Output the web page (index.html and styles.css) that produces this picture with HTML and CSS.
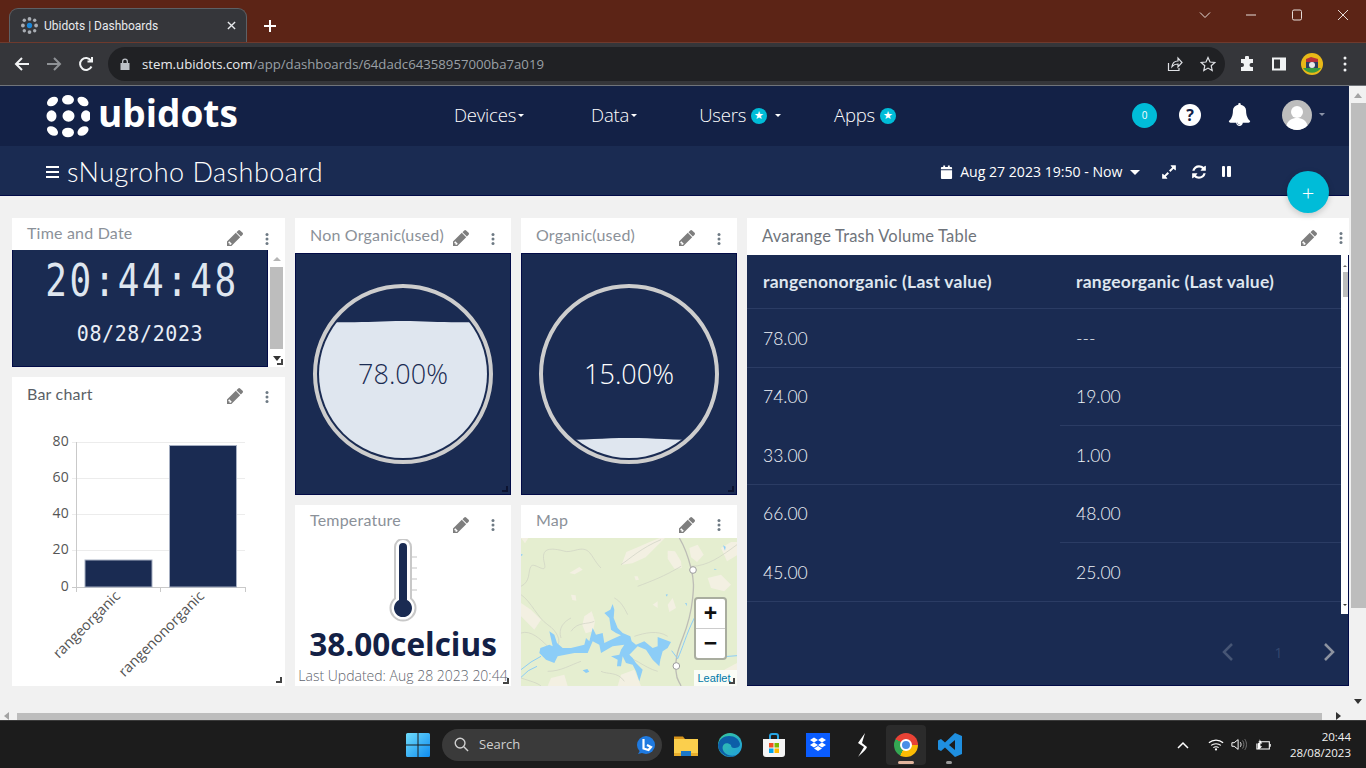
FILE: index.html
```html
<!DOCTYPE html>
<html lang="en">
<head>
<meta charset="utf-8">
<title>Ubidots | Dashboards</title>
<link rel="stylesheet" href="styles.css">
</head>
<body>
<svg class="sprite" aria-hidden="true">
  <symbol id="pencil" viewBox="115 224 1364 1364"><path d="M363 1536h128l91-91-235-235-91 91v107h107zM960 416l416 416-832 832H128v-416zM1643 512q0 53-37 90l-166 166-416-416 166-165q36-38 90-38 53 0 91 38l235 234q37 39 37 91z" transform="scale(.9) translate(0 100)"/></symbol>
  <symbol id="dots" viewBox="0 0 8 18"><circle cx="4" cy="3" r="2"/><circle cx="4" cy="9" r="2"/><circle cx="4" cy="15" r="2"/></symbol>
  <symbol id="grip" viewBox="0 0 6 6"><path d="M6 0v6H0V4h4V0z"/></symbol>
</svg>

<header class="browser">
  <div class="tabstrip">
    <div class="tab">
      <svg class="favicon" viewBox="0 0 18 18"><g fill="#a9adb3"><circle cx="9" cy="2" r="2"/><circle cx="3.500" cy="3.500" r="1.800"/><circle cx="14.500" cy="3.500" r="1.800"/><circle cx="2" cy="9" r="2"/><circle cx="16" cy="9" r="2"/><circle cx="3.500" cy="14.500" r="1.800"/><circle cx="14.500" cy="14.500" r="1.800"/><circle cx="9" cy="16" r="2"/></g><circle cx="9" cy="9" r="2.800" fill="#1a86d8"/></svg>
      <span class="tab-title">Ubidots | Dashboards</span>
      <svg class="tab-close" viewBox="0 0 10 10"><path d="M1 1l8 8M9 1l-8 8"/></svg>
    </div>
    <svg class="new-tab" viewBox="0 0 12 12"><path d="M6 0v12M0 6h12"/></svg>
    <div class="win-controls">
      <svg viewBox="0 0 12 12"><path d="M1 3.500l5 5 5-5"/></svg>
      <svg viewBox="0 0 12 12"><path d="M1 6h10"/></svg>
      <svg viewBox="0 0 12 12"><rect x="1.500" y="1" width="9" height="10" rx="1.500"/></svg>
      <svg viewBox="0 0 12 12"><path d="M1 1l10 10M11 1L1 11"/></svg>
    </div>
  </div>
  <div class="toolbar">
    <svg class="tool tool-back" viewBox="0 0 16 16"><path d="M15 8H2M8 2L2 8l6 6"/></svg>
    <svg class="tool tool-fwd" viewBox="0 0 16 16"><path d="M1 8h13M8 2l6 6-6 6"/></svg>
    <svg class="tool tool-reload" viewBox="0 0 16 16"><path d="M13.500 10.500A6 6 0 1 1 13 4.500M14 1v4.500H9.500"/></svg>
    <div class="omnibox">
      <svg class="lock" viewBox="0 0 10 12"><path d="M2 5V3.500a3 3 0 0 1 6 0V5h1.500v7H.5V5zM3.300 5h3.400V3.500a1.700 1.700 0 0 0-3.400 0z"/></svg>
      <span class="url"><b>stem.ubidots.com</b>/app/dashboards/64dadc64358957000ba7a019</span>
      <svg class="omni-ico share" viewBox="0 0 16 16"><path d="M1.500 7v7.500H12V12M5 10.500C5.500 7 8 5 11 5V2l4 4.500L11 11V8C8.500 8 6.500 8.800 5 10.500z"/></svg>
      <svg class="omni-ico star" viewBox="0 0 16 16"><path d="M8 1.500l2 4.500 4.800.500-3.600 3.200 1 4.800L8 12.100l-4.200 2.400 1-4.800L1.200 6.500 6 6z"/></svg>
    </div>
    <svg class="ext puzzle" viewBox="0 0 16 16"><path d="M6 1.500a2 2 0 0 1 4 0V3h4v4h-1.500a2 2 0 0 0 0 4H14v4H2v-4h1a2 2 0 0 0 0-4H2V3h4z"/></svg>
    <svg class="ext panel" viewBox="0 0 16 16"><path fill-rule="evenodd" d="M1 1.500h14v13H1zM3 3.500v9h6v-9z"/></svg>
    <svg class="profile" viewBox="0 0 22 22"><circle cx="11" cy="11" r="11" fill="#e9b918"/><path d="M2 15a11 11 0 0 0 18 0z" fill="#3a9c3d"/><rect x="5" y="6" width="12" height="9" fill="#2c3e63"/><path d="M5 6l5-2 7 2v3H5z" fill="#b7323a"/><circle cx="11" cy="12" r="3" fill="#e8e8e8"/></svg>
    <svg class="ext menu" viewBox="0 0 4 16"><circle cx="2" cy="2" r="1.500"/><circle cx="2" cy="8" r="1.500"/><circle cx="2" cy="14" r="1.500"/></svg>
  </div>
</header>

<div class="viewport">
  <div class="app">
    <nav class="topnav">
      <div class="logo">
        <svg class="logo-mark" viewBox="0 0 44 44"><g fill="#fff"><ellipse cx="22.500" cy="22" rx="6" ry="5.800"/><ellipse cx="22" cy="5.800" rx="6" ry="4.800"/><ellipse cx="22" cy="38.500" rx="6" ry="4.800"/><ellipse cx="5.500" cy="22" rx="5" ry="5.800"/><ellipse cx="40" cy="22" rx="5" ry="5.800"/><ellipse cx="6.500" cy="7.500" rx="6" ry="4.200" transform="rotate(-35 6.500 7.500)"/><ellipse cx="37" cy="7.500" rx="6" ry="4.200" transform="rotate(35 37 7.500)"/><ellipse cx="6.500" cy="37" rx="6" ry="4.200" transform="rotate(35 6.500 37)"/><ellipse cx="37" cy="37" rx="6" ry="4.200" transform="rotate(-35 37 37)"/></g></svg>
        <span class="logo-word">ubidots</span>
      </div>
      <a class="nav-item nav-devices">Devices<i class="caret-sm"></i></a>
      <a class="nav-item nav-data">Data<i class="caret-sm"></i></a>
      <a class="nav-item nav-users">Users<i class="star-badge">★</i><i class="caret-sm caret-gap"></i></a>
      <a class="nav-item nav-apps">Apps<i class="star-badge">★</i></a>
      <span class="count-badge">0</span>
      <span class="help">?</span>
      <svg class="bell" viewBox="0 0 1792 1792"><path d="M912 1696q0-16-16-16-59 0-101.500-42.500t-42.500-101.500q0-16-16-16t-16 16q0 73 51.500 124.500t124.500 51.500q16 0 16-16zm816-288q0 52-38 90t-90 38h-448q0 106-75 181t-181 75-181-75-75-181h-448q-52 0-90-38t-38-90q50-42 91-88t85-119.500 74.500-158.500 50-206 19.500-260q0-152 117-282.500t307-158.500q-8-19-8-39 0-40 28-68t68-28 68 28 28 68q0 20-8 39 190 28 307 158.500t117 282.500q0 139 19.500 260t50 206 74.500 158.500 85 119.500 91 88z"/></svg>
      <svg class="avatar" viewBox="0 0 30 30"><circle cx="15" cy="15" r="15" fill="#bdbdbd"/><circle cx="15" cy="12" r="6" fill="#fff"/><path d="M4.500 25.500C6 20 10 18 15 18s9 2 10.500 7.500A15 15 0 0 1 15 30 15 15 0 0 1 4.500 25.500z" fill="#fff"/></svg>
      <i class="caret-sm caret-user"></i>
    </nav>
    <div class="subbar">
      <span class="hamburger"><i></i><i></i><i></i></span>
      <h1 class="dash-title">sNugroho Dashboard</h1>
      <svg class="cal" viewBox="0 0 14 16"><path d="M1 6h12v8.500a1 1 0 0 1-1 1H2a1 1 0 0 1-1-1zM1 5V3.500a1 1 0 0 1 1-1h1.500V1h2v1.500h3V1h2v1.500H12a1 1 0 0 1 1 1V5z"/></svg>
      <span class="range">Aug 27 2023 19:50 - Now</span>
      <i class="caret-range"></i>
      <svg class="sub-ico ico-expand" viewBox="0 0 1792 1792"><path d="M883 1056q0 13-10 23l-332 332 144 144q19 19 19 45t-19 45-45 19h-448q-26 0-45-19t-19-45v-448q0-26 19-45t45-19 45 19l144 144 332-332q10-10 23-10t23 10l114 114q10 10 10 23zm781-864v448q0 26-19 45t-45 19-45-19l-144-144-332 332q-10 10-23 10t-23-10l-114-114q-10-10-10-23t10-23l332-332-144-144q-19-19-19-45t19-45 45-19h448q26 0 45 19t19 45z"/></svg>
      <svg class="sub-ico ico-refresh" viewBox="0 0 1792 1792"><path d="M1639 1056q0 5-1 7-64 268-268 434.500t-478 166.500q-146 0-282.500-55t-243.500-157l-129 129q-19 19-45 19t-45-19-19-45v-448q0-26 19-45t45-19h448q26 0 45 19t19 45-19 45l-137 137q71 66 161 102t187 36q134 0 250-65t186-179q11-17 53-117 8-23 30-23h192q13 0 22.500 9.500t9.500 22.500zm25-800v448q0 26-19 45t-45 19h-448q-26 0-45-19t-19-45 19-45l138-138q-148-137-349-137-134 0-250 65t-186 179q-11 17-53 117-8 23-30 23h-199q-13 0-22.500-9.500t-9.500-22.500v-7q65-268 270-434.500t480-166.500q146 0 284 55.500t245 156.500l130-129q19-19 45-19t45 19 19 45z"/></svg>
      <span class="pause"><i></i><i></i></span>
    </div>
    <button class="fab">+</button>
    <main class="canvas">
      <div class="col col-a">
        <section class="widget w-clock">
          <div class="w-head h-32"><span class="w-title">Time and Date</span><svg class="pen"><use href="#pencil"/></svg><svg class="kebab"><use href="#dots"/></svg></div>
          <div class="clock-row">
            <div class="clock">
              <div class="clock-time">20:44:48</div>
              <div class="clock-date">08/28/2023</div>
            </div>
            <div class="mini-scroll"><i class="arrow-up"></i><i class="mini-thumb"></i></div>
          </div>
          <i class="clock-down"></i>
          <svg class="grip grip-clock"><use href="#grip"/></svg>
        </section>
        <section class="widget w-bar">
          <div class="w-head h-32"><span class="w-title dark">Bar chart</span><svg class="pen"><use href="#pencil"/></svg><svg class="kebab"><use href="#dots"/></svg></div>
          <svg class="chart" viewBox="12 409 273 277">
            <g class="grid-lines"><path d="M72 442.500h173M72 478.500h173M72 514.500h173M72 550.500h173"/></g>
            <path class="axis" d="M76.500 442v150M72 587.500h173.500M160.500 587v5M245.500 587v5"/>
            <rect class="bar" x="85" y="560" width="67" height="27"/>
            <rect class="bar" x="169.500" y="445.500" width="67" height="141.500"/>
            <g class="y-labels"><text x="69" y="446">80</text><text x="69" y="482">60</text><text x="69" y="518">40</text><text x="69" y="554">20</text><text x="69" y="591">0</text></g>
            <text class="x-label" transform="translate(121 597) rotate(-45)">rangeorganic</text>
            <text class="x-label" transform="translate(205 597) rotate(-45)">rangenonorganic</text>
          </svg>
          <svg class="grip grip-bar"><use href="#grip"/></svg>
        </section>
      </div>

      <div class="col col-b">
        <section class="widget w-gauge">
          <div class="w-head h-35"><span class="w-title">Non Organic(used)</span><svg class="pen"><use href="#pencil"/></svg><svg class="kebab"><use href="#dots"/></svg></div>
          <div class="navy-body">
            <svg class="gauge" viewBox="-108 -121 216 242">
              <defs><clipPath id="clip-a"><circle r="84"/></clipPath></defs>
              <path clip-path="url(#clip-a)" class="liquid" d="M-90 -53C-50 -50 -30 -53 0 -53S50 -50 90 -53V90H-90z"/>
              <circle class="ring" r="88"/>
              <text class="gauge-text on-light" y="10">78.00%</text>
            </svg>
            <svg class="grip grip-navy"><use href="#grip"/></svg>
          </div>
        </section>
        <section class="widget w-temp">
          <div class="w-head h-33"><span class="w-title">Temperature</span><svg class="pen"><use href="#pencil"/></svg><svg class="kebab"><use href="#dots"/></svg></div>
          <svg class="thermo" viewBox="0 0 32 86">
            <path class="thermo-ticks" d="M24 18h6M24 29h6M24 40h6M24 51h6"/>
            <path class="thermo-shell" d="M8 8a8 8 0 0 1 16 0v51.500a12.500 12.500 0 1 1-16 0z"/>
            <path class="thermo-fill" d="M12 8a4 4 0 0 1 8 0v53a9 9 0 1 1-8 0z"/>
          </svg>
          <div class="temp-value">38.00celcius</div>
          <div class="temp-updated">Last Updated: Aug 28 2023 20:44</div>
          <svg class="grip grip-temp"><use href="#grip"/></svg>
        </section>
      </div>

      <div class="col col-b">
        <section class="widget w-gauge">
          <div class="w-head h-35"><span class="w-title">Organic(used)</span><svg class="pen"><use href="#pencil"/></svg><svg class="kebab"><use href="#dots"/></svg></div>
          <div class="navy-body">
            <svg class="gauge" viewBox="-108 -121 216 242">
              <defs><clipPath id="clip-b"><circle r="84"/></clipPath></defs>
              <path clip-path="url(#clip-b)" class="liquid" d="M-90 66C-50 67 -30 64 0 64S50 67 90 66V90H-90z"/>
              <circle class="ring" r="88"/>
              <text class="gauge-text on-dark" y="10">15.00%</text>
            </svg>
            <svg class="grip grip-navy"><use href="#grip"/></svg>
          </div>
        </section>
        <section class="widget w-map">
          <div class="w-head h-33"><span class="w-title">Map</span><svg class="pen"><use href="#pencil"/></svg><svg class="kebab"><use href="#dots"/></svg></div>
          <div class="map">
            <svg class="map-svg" viewBox="0 0 648 444">
              <rect width="648" height="444" fill="#e5eed0"/>
              <g class="patches">
                <path d="M0 0h22l-10 16zM302 80l14-38 34-14 36-16 30-12h16l-28 28-30 30-40 18zM440 38l22 2 18 30 2 20-22 2-20-30zM505 30l25-10 18 30-20 22-18-14zM600 30l30-18 18 0v40l-30 18zM145 105l30-18 10 8-24 14zM150 170l14 2 2 16-12-2zM190 235l22-15 10 30-6 30-22 6-10-25zM0 195l30 20 30 30-20 30-40-40zM300 410l40-15 20 49h-70zM90 420l40-10 10 34H80zM440 200l15-20 10 30-20 12zM560 120l40-10 30 30-20 20-40-10zM395 200l15-10 0 20zM340 115l10 0 4 10-10 2zM610 395l38-20v22h-30z"/>
              </g>
              <g class="roads">
                <path d="M0 145C30 130 20 100 30 85S80 115 70 75S80 30 110 35S130 45 170 35S210 60 240 90"/>
                <path d="M0 170C30 190 50 240 80 260s40 50 30 60"/>
                <path d="M0 285c30-10 60 20 80 40"/>
                <path d="M150 280c20-30 50-20 70-30"/>
                <path d="M510 85c50 0 90-30 138-65"/>
                <path d="M300 80c30-20 60-50 120-75"/>
                <path d="M350 145c40-15 80-30 130-60"/>
                <path d="M280 180c20 10 30 30 40 50"/>
                <path d="M340 295c30-10 70-20 100 0"/>
                <path d="M410 400c-40-10-80-50-100-40"/>
                <path d="M80 400c40 0 70-20 100-30"/>
                <path d="M0 420c30 10 50 15 60 24"/>
                <path d="M120 300c-10-30 10-50 30-60"/>
                <path d="M240 400c20 10 50 0 70 30"/>
                <path class="road-main" d="M475 0c15 25 25 50 35 90s8 60 5 90-10 70-30 120-22 70-20 100 10 30 15 44"/>
              </g>
              <path class="lake" d="M58 330L85 320 95 325 85 280 100 290 108 315 125 330 150 330 190 320 195 300 205 310 215 270 225 290 245 285 250 315 270 305 300 292 285 285 270 275 265 240 250 225 268 215 275 198 280 215 278 240 290 270 305 285 328 295 332 310 345 320 370 310 395 330 410 325 410 297 450 312 440 330 425 340 418 365 415 385 395 365 375 335 350 325 325 350 335 360 345 375 365 395 355 430 345 400 335 380 315 375 305 355 300 385 288 385 290 365 270 355 295 350 300 335 310 320 275 325 240 345 235 320 215 310 200 345 160 345 110 355 100 375 75 365 55 345z"/>
              <g class="rivers">
                <path d="M60 355L30 372 0 395"/>
                <path d="M48 385L22 398 0 418"/>
                <path d="M452 338L470 362C485 330 495 290 520 240"/>
                <path d="M610 356L648 353"/>
              </g>
              <path class="lake" d="M185 397l14-4 6 8-10 4zM606 22l8 4-2 12zM434 170l6-2-2 8zM492 195l5 0 1 10zM580 92l8 2-8 2zM0 48l6 2-6 4z"/>
              <g class="shield"><circle cx="516" cy="96" r="10"/><circle cx="466" cy="384" r="10"/></g>
            </svg>
            <div class="zoom-ctl"><span class="zoom-btn">+</span><span class="zoom-btn">−</span></div>
            <div class="leaflet">Leaflet</div>
            <svg class="grip grip-map"><use href="#grip"/></svg>
          </div>
        </section>
      </div>

      <div class="col col-d">
        <section class="widget w-table">
          <div class="w-head h-37 head-table"><span class="w-title">Avarange Trash Volume Table</span><svg class="pen"><use href="#pencil"/></svg><svg class="kebab"><use href="#dots"/></svg></div>
          <div class="table-body">
            <div class="table-row">
              <table class="data">
                <thead><tr><th class="c1">rangenonorganic (Last value)</th><th>rangeorganic (Last value)</th></tr></thead>
                <tbody>
                  <tr><td class="c1">78.00</td><td>---</td></tr>
                  <tr><td class="c1 no-line">74.00</td><td>19.00</td></tr>
                  <tr><td class="c1">33.00</td><td>1.00</td></tr>
                  <tr><td class="c1 no-line">66.00</td><td>48.00</td></tr>
                  <tr><td class="c1">45.00</td><td>25.00</td></tr>
                </tbody>
              </table>
              <div class="tbl-scroll"><i class="tbl-up"></i><i class="tbl-thumb"></i><i class="tbl-down"></i></div>
            </div>
            <div class="pager">
              <svg class="pg pg-prev" viewBox="0 0 12 20"><path d="M10 2L2 10l8 8"/></svg>
              <span class="pg-num">1</span>
              <svg class="pg pg-next" viewBox="0 0 12 20"><path d="M2 2l8 8-8 8"/></svg>
            </div>
          </div>
        </section>
      </div>
    </main>
    <div class="hscroll"><i class="h-left"></i><i class="h-thumb"></i><i class="h-right"></i></div>
  </div>
  <aside class="vscroll"><i class="v-up"></i><i class="v-thumb"></i><i class="v-down"></i></aside>
</div>

<footer class="taskbar">
  <svg class="win" viewBox="0 0 24 24"><defs><linearGradient id="wg" x1="0" y1="0" x2="1" y2="1"><stop offset="0" stop-color="#6fdcfb"/><stop offset="1" stop-color="#0f8cf0"/></linearGradient></defs><path fill="url(#wg)" d="M0 1.500A1.500 1.500 0 0 1 1.500 0h10v11.500H0zM12.500 0h10A1.500 1.500 0 0 1 24 1.500v10H12.500zM0 12.500h11.500V24h-10A1.500 1.500 0 0 1 0 22.500zM12.500 12.500H24v10a1.500 1.500 0 0 1-1.500 1.500h-10z"/></svg>
  <div class="search">
    <svg class="s-ico" viewBox="0 0 16 16"><circle cx="6.500" cy="6.500" r="5.200"/><path d="M10.500 10.500L15 15"/></svg>
    <span>Search</span>
    <svg class="bing" viewBox="0 0 20 20"><circle cx="10" cy="10" r="9" fill="#1f7ae0"/><path d="M2 19l3-5 5 3z" fill="#1f7ae0"/><path d="M7.500 4v9.500l5 1.500 2.500-3-4-2" fill="none" stroke="#fff" stroke-width="2.200"/></svg>
  </div>
  <svg class="app-ico ico-folder" viewBox="0 0 24 24"><path d="M0 3.500h9l2 2.500H0z" fill="#d8941a"/><path d="M0 6h24v17H0z" fill="#fbcf4d"/><path d="M0 20h24v3H0z" fill="#e8ae2c"/><path d="M7 18h10v5H7z" fill="#1b78c9"/></svg>
  <svg class="app-ico ico-edge" viewBox="0 0 24 24"><defs><linearGradient id="eg" x1="0" y1="0" x2="1" y2="1"><stop offset="0" stop-color="#37c99a"/><stop offset="1" stop-color="#1f9de0"/></linearGradient></defs><circle cx="12" cy="12" r="12" fill="url(#eg)"/><path d="M0 12C1 6 6 3 11 3c6 0 10 3 11 8 0 3-3 4-6 4-2 0-3-1-3-3C8 8 3 12 5 17c1.500 4 7 7 13 5-4 3-9 2-13-1C2 19 0 16 0 12z" fill="#0d5ea8"/></svg>
  <svg class="app-ico ico-store" viewBox="0 0 24 24"><path d="M8 6V3a2 2 0 0 1 2-2h4a2 2 0 0 1 2 2v3" fill="none" stroke="#27a5e4" stroke-width="2"/><path d="M1 6h22v15a3 3 0 0 1-3 3H4a3 3 0 0 1-3-3z" fill="#f4f4f4"/><path d="M7 10h4.500v4.500H7z" fill="#f25022"/><path d="M12.500 10H17v4.500h-4.500z" fill="#7fba00"/><path d="M7 15.500h4.500V20H7z" fill="#00a4ef"/><path d="M12.500 15.500H17V20h-4.500z" fill="#ffb900"/></svg>
  <svg class="app-ico ico-dropbox" viewBox="0 0 24 24"><path d="M0 0h24v24H0z" fill="#0a5cff"/><path d="M8 4.500l4 2.500-4 2.500L4 7zM16 4.500l4 2.500-4 2.500L12 7zM8 9.500l4 2.500-4 2.500L4 12zM16 9.500l4 2.500-4 2.500L12 12zM8 15.500l4-2.500 4 2.500-4 2.500z" fill="#fff"/></svg>
  <svg class="app-ico ico-bolt" viewBox="0 0 24 24"><path d="M15 0L8 10l6 4-6 10c3-3 8-7 9-10l-5-4z" fill="#fff"/></svg>
  <div class="chrome-slot"><span class="chrome-ico"><i></i></span><b class="underline"></b></div>
  <div class="code-slot">
    <svg class="app-ico" viewBox="0 0 24 24"><path d="M17 0l7 3v18l-7 3-10-9.500L3 18l-3-1.500v-9L3 6l4 3.500zM17 7l-6 5 6 5z" fill="#1f8fe0"/></svg>
    <b class="underline grey"></b>
  </div>
  <div class="tray">
    <svg class="t-caret" viewBox="0 0 12 8"><path d="M1 7l5-5 5 5"/></svg>
    <svg class="t-wifi" viewBox="0 0 18 14"><path d="M1 5c4.500-4 11.500-4 16 0M3.500 8c3-2.500 8-2.500 11 0M6 10.500c1.800-1.200 4.200-1.200 6 0"/><circle cx="9" cy="12.500" r="1.300"/></svg>
    <svg class="t-vol" viewBox="0 0 18 14"><path d="M1 5h2.500L8 1.500v11L3.500 9H1zM10.500 4.500c1 1.500 1 3.500 0 5"/><path class="t-dim" d="M13 2.500c2 2.500 2 6.500 0 9M15.500 1c2.500 3.500 2.500 8.500 0 12"/></svg>
    <svg class="t-batt" viewBox="0 0 18 14"><path d="M3 4h12v8H1V6"/><path d="M16 6.500v3"/><path class="t-fill" d="M2 12V6l2-1.500V1L7 6H5v3l2 0-3 3z"/></svg>
    <div class="clock-tray"><span>20:44</span><span>28/08/2023</span></div>
  </div>
</footer>
</body>
</html>
```

FILE: styles.css
```css
* { box-sizing: border-box; }
html, body { margin: 0; height: 768px; overflow: hidden; }
body { display: flex; flex-direction: column; width: 1366px; font-family: "Open Sans", sans-serif; background: #f1f1f1; }
i { display: block; font-style: normal; }
svg { display: block; flex: none; }
.sprite { position: absolute; width: 0; height: 0; }

/* browser chrome */
.browser { flex: none; height: 86px; }
.tabstrip { height: 43px; background: #5c2416; display: flex; align-items: flex-end; padding-left: 9px; border-bottom: 1px solid #6e3a2d; }
.tab { width: 238px; height: 34px; background: #35363a; border-radius: 9px 9px 0 0; border: 1px solid #5d6166; border-bottom: 0; display: flex; align-items: center; padding: 0 0 0 11px; }
.favicon { width: 17px; height: 17px; }
.tab-title { margin-left: 6px; color: #e8eaed; font: 12px "Roboto", sans-serif; flex: 1; }
.tab-close { width: 9px; height: 9px; margin-right: 10px; fill: none; stroke: #e8eaed; stroke-width: 1.500; }
.new-tab { width: 12px; height: 12px; margin: 0 0 10px 17px; fill: none; stroke: #fff; stroke-width: 2; }
.win-controls { margin-left: auto; align-self: flex-start; display: flex; padding-top: 9px; padding-right: 17px; gap: 34px; }
.win-controls svg { width: 12px; height: 12px; fill: none; stroke: #e6dcd8; stroke-width: 1; }
.toolbar { height: 43px; background: #35363a; border-bottom: 1px solid #70747a; display: flex; align-items: center; position: relative; }
.tool { width: 16px; height: 16px; fill: none; stroke-width: 2; stroke: #f1f3f4; }
.tool-back { margin-left: 14px; }
.tool-fwd { margin-left: 16px; stroke: #8f9296; }
.tool-reload { margin-left: 16px; }
.omnibox { margin-left: 14px; width: 1117px; height: 34px; background: #202124; border-radius: 17px; display: flex; align-items: center; }
.lock { width: 10px; height: 12px; margin-left: 12px; fill: #bdc1c6; }
.url { margin-left: 12px; font: 13.200px "Open Sans", sans-serif; color: #9aa0a6; flex: 1; white-space: nowrap; }
.url b { color: #e8eaed; font-weight: 400; }
.omni-ico { width: 16px; height: 16px; fill: none; stroke: #dfe1e5; stroke-width: 1.200; }
.share { margin-right: 17px; }
.star { margin-right: 9px; }
.ext { fill: #f1f3f4; }
.puzzle { width: 16px; height: 16px; margin-left: 14px; }
.panel { width: 16px; height: 16px; margin-left: 16px; }
.profile { width: 22px; height: 22px; margin-left: 14px; }
.menu { width: 4px; height: 16px; margin-left: 20px; }

/* app */
.viewport { flex: none; height: 634px; display: flex; }
.app { width: 1349px; display: flex; flex-direction: column; position: relative; }
.topnav { height: 60px; background: #132146; display: flex; align-items: center; color: #fff; }
.logo { display: flex; align-items: center; margin-left: 46px; width: 191px; }
.logo-mark { width: 44px; height: 44px; }
.logo-word { margin-left: 8px; font: 700 37px/44px "Open Sans", sans-serif; color: #fff; margin-top: -5px; }
.nav-item { display: flex; align-items: center; font: 300 18.500px "Open Sans", sans-serif; color: #fff; letter-spacing: -.2px; margin-top: -2px; }
.nav-devices { margin-left: 217px; }
.nav-data { margin-left: 67px; }
.nav-users { margin-left: 62px; }
.nav-apps { margin-left: 53px; }
.caret-sm { width: 0; height: 0; border: 3.500px solid transparent; border-top-color: #fff; border-bottom: 0; margin-left: 2px; margin-top: 2px; }
.caret-gap { margin-left: 8px; }
.star-badge { width: 16px; height: 16px; border-radius: 50%; background: #00bcd8; color: #fff; font-size: 11px; line-height: 16px; text-align: center; margin-left: 5px; margin-top: 2px; font-family: "DejaVu Sans", sans-serif; }
.count-badge { margin-left: 236px; width: 25px; height: 25px; border-radius: 50%; background: #00bcd8; color: #fff; font-size: 10px; line-height: 25px; text-align: center; }
.help { margin-left: 22px; width: 22px; height: 22px; border-radius: 50%; background: #fff; color: #132146; font: 700 16px/22px "Open Sans", sans-serif; text-align: center; margin-top: -2px; }
.bell { width: 23px; height: 23px; fill: #fff; margin-left: 27px; margin-top: -2px; }
.avatar { width: 30px; height: 30px; margin-left: 31px; margin-top: -1px; }
.caret-user { border-top-color: #8b93a7; margin-left: 7px; margin-top: -2px; }

.subbar { height: 50px; padding-top: 3px; background: #1a2b52; border-bottom: 1px solid #020b47; display: flex; align-items: center; color: #fff; }
.hamburger { margin-left: 46px; width: 13px; display: flex; flex-direction: column; gap: 3px; }
.hamburger i { height: 2px; background: #fff; }
.dash-title { margin: 0 0 0 8px; font: 300 27px "Lato", sans-serif; letter-spacing: .5px; color: #fff; }
.cal { width: 13px; height: 16px; fill: #fff; margin-left: 617px; }
.range { margin-left: 7px; font: 400 14.100px "Open Sans", sans-serif; color: #fff; }
.caret-range { width: 0; height: 0; border: 5px solid transparent; border-top: 5px solid #fff; border-bottom: 0; margin-left: 7px; margin-top: 1px; }
.sub-ico { width: 16px; height: 16px; fill: #fff; }
.ico-expand { margin-left: 21px; }
.ico-refresh { margin-left: 14px; }
.pause { display: flex; gap: 2px; margin-left: 15px; }
.pause i { width: 3.500px; height: 11px; background: #fff; border-radius: 1px; }
.fab { position: absolute; left: 1287px; top: 85px; width: 42px; height: 42px; border: 0; padding: 0; border-radius: 50%; background: #00bcd8; color: #fff; font: 300 22px/40px "Open Sans", sans-serif; box-shadow: 0 2px 6px rgba(0, 0, 0, .18); z-index: 3; }

/* dashboard */
.canvas { height: 517px; padding: 22px 0 0 12px; display: flex; gap: 10px; background: #f1f1f1; }
.col { display: flex; flex-direction: column; gap: 10px; height: 468px; }
.col-a { width: 273px; }
.col-b { width: 216px; }
.col-d { width: 602px; }
.widget { background: #fff; position: relative; flex: none; }
.w-clock { height: 149px; }
.w-bar { height: 309px; }
.w-gauge { height: 277px; }
.w-temp, .w-map { height: 181px; }
.w-table { height: 468px; }
.w-head { display: flex; padding-left: 15px; padding-right: 10px; background: #fff; }
.h-32 { height: 32px; }
.h-33 { height: 33px; }
.h-35 { height: 35px; }
.h-37 { height: 37px; }
.w-title { flex: 1; font: 400 16px/30px "Lato", sans-serif; color: #8b9199; letter-spacing: .2px; white-space: nowrap; }
.h-35 .w-title { line-height: 33px; }
.h-33 .w-title { line-height: 30px; }
.h-37 .w-title { line-height: 36px; font-size: 16.500px; color: #6f747b; }
.w-title.dark { color: #5a5f66; line-height: 33px; }
.pen { width: 16px; height: 16px; fill: #7e7e7e; margin-top: 12px; }
.kebab { width: 6px; height: 14px; fill: #6e7a84; margin: 14px 5px 0 21px; }
.w-bar .pen { margin-top: 11px; }
.w-bar .kebab { margin-top: 13px; }
.h-33 .kebab { margin-top: 13px; }
.head-table { padding-right: 0; }
.head-table .kebab { margin-top: 13px; margin-right: 5px; }

/* clock */
.clock-row { height: 117px; display: flex; }
.clock { width: 256px; background: #1a2b52; border: 1px solid #020b47; border-top: 0; color: #dfe6ef; text-align: center; }
.clock-time { font: 400 36px/36px "DejaVu Sans Mono", monospace; letter-spacing: 2.500px; margin-top: 13px; padding-left: 4px; transform: scaleY(1.25); }
.clock-date { font: 400 20px/24px "DejaVu Sans Mono", monospace; letter-spacing: .6px; margin-top: 22px; color: #e8eef6; transform: scaleY(1.1); }
.mini-scroll { flex: 1; position: relative; display: flex; flex-direction: column; align-items: center; padding-top: 7px; }
.arrow-up { width: 0; height: 0; border: 4px solid transparent; border-bottom: 4px solid #b5b5b5; border-top: 0; }
.mini-thumb { width: 13px; height: 82px; background: #bdbdbd; margin-top: 6px; }
.grip { position: absolute; width: 6px; height: 6px; fill: #444; }
.clock-down { position: absolute; top: 138px; left: 261px; width: 0; height: 0; border: 4px solid transparent; border-top: 5px solid #333; border-bottom: 0; }
.grip-clock { right: 2px; bottom: 2px; }
.grip-bar { right: 3px; bottom: 3px; }
.grip-temp { right: 2px; bottom: 2px; }
.grip-map { right: 2px; bottom: 2px; }
.grip-navy { right: 2px; bottom: 2px; fill: #0c1330; }

/* bar chart */
.chart { width: 273px; height: 277px; }
.grid-lines { stroke: #ececec; fill: none; }
.axis { stroke: #c9c9c9; fill: none; }
.bar { fill: #1a2b52; stroke: #a6afc2; stroke-width: 1; }
.y-labels text { font: 14px "Open Sans", sans-serif; fill: #555; text-anchor: end; letter-spacing: .3px; }
.x-label { font: 14.300px "Open Sans", sans-serif; fill: #555; text-anchor: end; }

/* gauges */
.navy-body { height: 242px; background: #1a2b52; border: 1px solid #020b47; position: relative; }
.gauge { width: 216px; height: 242px; margin: -1px; }
.liquid { fill: #dfe6ef; }
.ring { fill: none; stroke: #cdcdcd; stroke-width: 4; }
.gauge-text { font: 300 27px "Open Sans", sans-serif; text-anchor: middle; }
.on-light { fill: #1a2b52; }
.on-dark { fill: #fff; }

/* temperature */
.thermo { width: 32px; height: 86px; margin: 1px auto 0; }
.thermo-ticks { stroke: #d8d8d8; stroke-width: 1.500; fill: none; }
.thermo-shell { fill: #fff; stroke: #c8c8c8; stroke-width: 2; }
.thermo-fill { fill: #1a2b52; }
.temp-value { font: 700 31.500px/40px "Open Sans", sans-serif; color: #132146; text-align: center; margin-top: -1px; white-space: nowrap; }
.temp-updated { font: 300 14px/18px "Open Sans", sans-serif; color: #5f656e; text-align: center; margin-top: 3px; white-space: nowrap; }

/* map */
.map { height: 148px; position: relative; overflow: hidden; }
.map-svg { width: 216px; height: 148px; }
.patches { fill: #f3f0e2; }
.lake { fill: #8ccdf7; }
.rivers { fill: none; stroke: #8ccdf7; stroke-width: 3; }
.roads { fill: none; stroke: #cdd0c2; stroke-width: 2; }
.road-main { stroke: #bdbdb6; stroke-width: 4; }
.shield circle { fill: #fff; stroke: #9c9c9c; stroke-width: 3; }
.zoom-ctl { position: absolute; left: 173px; top: 59px; width: 33px; height: 63px; background: #fff; border: 2px solid #a9ad9f; border-radius: 4px; display: flex; flex-direction: column; }
.zoom-btn { flex: 1; display: block; text-align: center; font: 700 23px/29px "Liberation Sans", sans-serif; color: #111; }
.zoom-btn + .zoom-btn { border-top: 1px solid #ccc; }
.leaflet { position: absolute; right: 0; bottom: 0; width: 43px; height: 16px; background: rgba(255, 255, 255, .8); font: 11px/16px "Liberation Sans", sans-serif; color: #0078a8; text-align: center; padding-right: 3px; }

/* table */
.table-body { height: 431px; background: #1a2b52; border: 1px solid #020b47; border-width: 0 1px 1px 0; position: relative; }
.table-row { display: flex; height: 359px; }
.data { width: 595px; height: 347px; border-collapse: collapse; table-layout: fixed; align-self: flex-start; color: #dfe6ef; font-family: "Lato", sans-serif; }
.data th, .data td { text-align: left; padding: 0 0 0 16px; border-bottom: 1px solid #2b3c64; }
.data th { height: 54px; font-weight: 700; font-size: 17.500px; letter-spacing: .25px; }
.data td { height: 58.500px; font-weight: 300; font-size: 17.500px; color: #f0f4f8; }
.c1 { width: 313px; }
.data td.no-line { border-bottom-color: transparent; }
.tbl-scroll { width: 7px; background: #fff; display: flex; flex-direction: column; align-items: flex-end; position: relative; }
.tbl-up, .tbl-down { width: 0; height: 0; border: 2px solid transparent; position: absolute; right: 1px; }
.tbl-up { border-bottom: 2px solid #666; border-top: 0; top: 10px; }
.tbl-down { border-top: 2px solid #333; border-bottom: 0; bottom: 8px; }
.tbl-thumb { width: 5px; height: 25px; background: #bdbdbd; margin-top: 17px; }
.pager { display: flex; align-items: center; height: 40px; padding: 0 0 0 475px; margin-top: 18px; }
.pg { width: 12px; height: 20px; fill: none; stroke-width: 2.500; }
.pg-prev { stroke: #475675; }
.pg-next { stroke: #8d93a0; }
.pg-num { width: 89px; text-align: center; color: #34486f; font: 14px "Open Sans", sans-serif; margin-top: 2px; }

/* page scrollbars */
.hscroll { flex: 1; background: #f1f1f1; display: flex; align-items: center; position: relative; }
.h-left { width: 0; height: 0; border: 4px solid transparent; border-right: 5px solid #a3a3a3; border-left: 0; margin-left: 4px; }
.h-thumb { width: 1305px; height: 7px; background: #bdbdbd; margin-left: 8px; }
.h-right { width: 0; height: 0; border: 4px solid transparent; border-left: 5px solid #333; border-right: 0; margin-left: 14px; }
.vscroll { width: 17px; background: #f1f1f1; position: relative; display: flex; flex-direction: column; align-items: center; }
.v-up { width: 0; height: 0; border: 4px solid transparent; border-bottom: 5px solid #a3a3a3; border-top: 0; margin-top: 7px; }
.v-thumb { width: 15px; height: 505px; background: #bdbdbd; margin: 5px 0 0 2px; }
.v-down { width: 0; height: 0; border: 4px solid transparent; border-top: 5px solid #333; border-bottom: 0; margin-top: 91px; }

/* taskbar */
.taskbar { flex: none; height: 48px; background: #1c1c1c; border-top: 1px solid #3a3a3a; display: flex; align-items: center; color: #fff; }
.win { width: 24px; height: 24px; margin-left: 406px; }
.search { width: 220px; height: 32px; border-radius: 16px; background: #3a3a3a; margin-left: 12px; display: flex; align-items: center; position: relative; color: #d0d0d0; font: 13px "Open Sans", sans-serif; }
.search span { margin-top: -2px; }
.s-ico { width: 15px; height: 15px; margin: 0 10px 0 12px; fill: none; stroke: #d0d0d0; stroke-width: 1.500; }
.bing { width: 20px; height: 20px; margin-left: auto; margin-right: 6px; }
.app-ico { width: 24px; height: 24px; }
.ico-folder { margin-left: 12px; }
.ico-edge { margin-left: 20px; }
.ico-store { margin-left: 20px; }
.ico-dropbox { margin-left: 20px; }
.ico-bolt { margin-left: 20px; }
.chrome-slot { margin-left: 12px; width: 40px; height: 40px; background: #2b2b2b; border-radius: 4px; display: flex; align-items: center; justify-content: center; position: relative; }
.chrome-ico { width: 24px; height: 24px; border-radius: 50%; display: flex; align-items: center; justify-content: center; background: conic-gradient(from 0deg, #e94235 0 90deg, #fbbc04 90deg 210deg, #34a853 210deg 300deg, #e94235 300deg); }
.chrome-ico i { width: 12px; height: 12px; border-radius: 50%; background: #4a8fe7; border: 2px solid #fff; }
.underline { position: absolute; left: 12px; bottom: 1px; width: 16px; height: 3px; border-radius: 2px; background: #e2b59e; }
.code-slot { margin-left: 12px; width: 24px; height: 40px; display: flex; align-items: center; position: relative; }
.underline.grey { left: 8px; width: 6px; background: #9a9a9a; bottom: 1px; }
.tray { margin-left: auto; display: flex; align-items: center; padding-right: 15px; }
.t-caret { width: 12px; height: 8px; fill: none; stroke: #fff; stroke-width: 1.500; }
.t-wifi { width: 16px; height: 13px; margin-left: 19px; fill: none; stroke: #fff; stroke-width: 1.300; }
.t-wifi circle { fill: #fff; stroke: none; }
.t-vol { width: 16px; height: 13px; margin-left: 7px; fill: none; stroke: #fff; stroke-width: 1.100; }
.t-dim { stroke: #777; }
.t-batt { width: 16px; height: 13px; margin-left: 9px; fill: none; stroke: #fff; stroke-width: 1.200; }
.t-fill { fill: #fff; stroke: none; }
.clock-tray { margin-left: 18px; display: flex; flex-direction: column; align-items: flex-end; font: 11.500px/16px "Open Sans", sans-serif; color: #f2f2f2; }
```
